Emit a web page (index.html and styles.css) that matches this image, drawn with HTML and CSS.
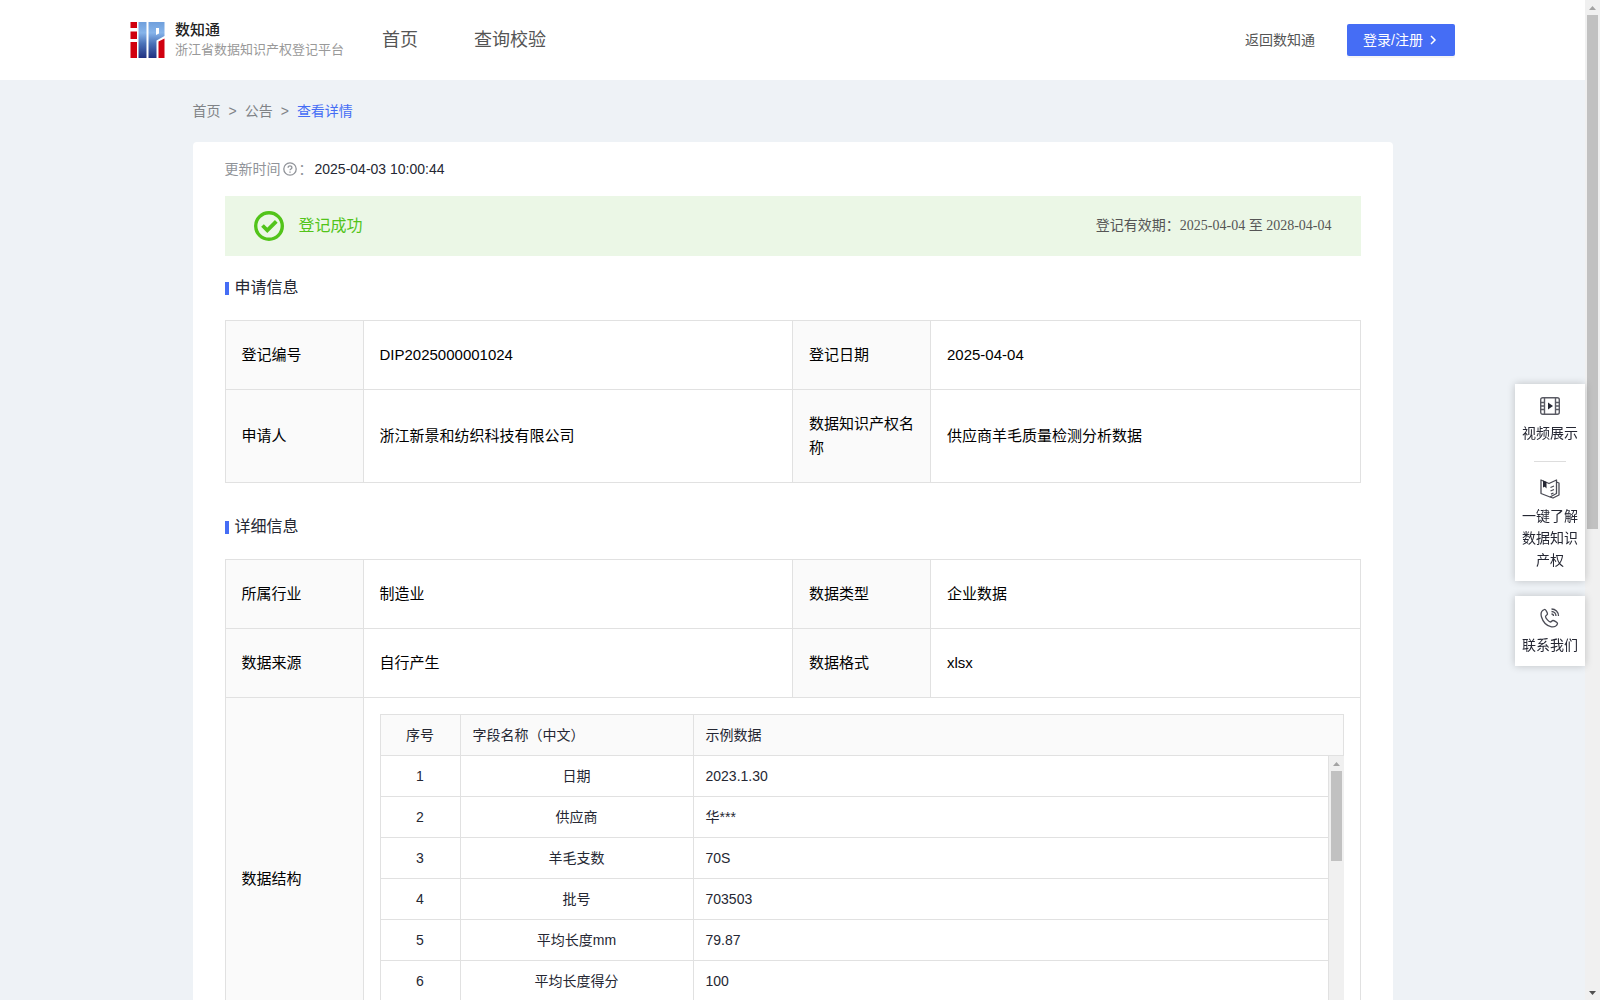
FILE: index.html
```html
<!DOCTYPE html>
<html lang="zh-CN">
  <head>
    <meta charset="utf-8">
    <meta name="viewport" content="width=device-width, initial-scale=1">
    <title>浙江省数据知识产权登记平台</title>
    <link rel="stylesheet" href="styles.css">
  </head>
  <body>
    <div class="page">
      <header class="header">
        <a class="brand" href="#">
          <svg class="brand-logo" viewBox="0 0 34 36" aria-hidden="true">
            <defs>
              <linearGradient id="blue" gradientUnits="userSpaceOnUse" x1="0" y1="0" x2="0" y2="36">
                <stop offset="0" stop-color="#6f9fdc"/>
                <stop offset="0.3" stop-color="#86b4ea"/>
                <stop offset="0.6" stop-color="#4a72b8"/>
                <stop offset="1" stop-color="#1f2f80"/>
              </linearGradient>
            </defs>
            <path fill="#d0000f" d="M0 0h6.500v6H0zM0 9.500h6.500v7.500H0zM0 20h6.500v16H0zM28 19.500l6-3V36h-6z"/>
            <path fill="url(#blue)" d="M8 0h8v36H8z"/>
            <path fill="url(#blue)" fill-rule="evenodd" d="M18 0h16v14l-8 4.500V36h-8zM25.500 6v7l3-1.500V6z"/>
          </svg>
          <span class="brand-text">
            <strong>数知通</strong>
            <span>浙江省数据知识产权登记平台</span>
          </span>
        </a>
        <nav class="nav">
          <a href="#">首页</a>
          <a href="#">查询校验</a>
        </nav>
        <a class="back" href="#">返回数知通</a>
        <button class="login" type="button">
          登录/注册
          <svg width="12" height="12" viewBox="0 0 12 12" aria-hidden="true"><path d="M4 2l4 4-4 4" fill="none" stroke="currentColor" stroke-width="1.5"/></svg>
        </button>
      </header>

      <main class="container">
        <nav class="breadcrumb" aria-label="breadcrumb">
          <a href="#">首页</a>
          <span>&gt;</span>
          <a href="#">公告</a>
          <span>&gt;</span>
          <a class="current" href="#">查看详情</a>
        </nav>

        <section class="card">
          <div class="update">
            <span class="update-label">更新时间</span>
            <svg width="14" height="14" viewBox="0 0 14 14" fill="none" stroke="#909399" stroke-width="1.3" aria-hidden="true">
              <circle cx="7" cy="7" r="6.2"/>
              <path d="M5.100 5.700c0-2.500 3.800-2.500 3.800 0 0 1.300-1.900 1.300-1.900 2.600M7 9.500v1.300"/>
            </svg>
            <span class="update-label">：</span>
            <time>2025-04-03 10:00:44</time>
          </div>

          <div class="banner">
            <svg width="30" height="30" viewBox="0 0 30 30" fill="none" stroke="#52c41a" stroke-width="3.400" aria-hidden="true">
              <circle cx="15" cy="15" r="13.300"/>
              <path d="M8.500 14.500l4.800 4.800 9-9" stroke-width="3.800"/>
            </svg>
            <span class="banner-status">登记成功</span>
            <span class="banner-date">登记有效期：2025-04-04 至 2028-04-04</span>
          </div>

          <h2>申请信息</h2>
          <table class="info">
            <colgroup><col class="label"><col><col class="label"><col></colgroup>
            <tr>
              <th scope="row">登记编号</th>
              <td>DIP2025000001024</td>
              <th scope="row">登记日期</th>
              <td>2025-04-04</td>
            </tr>
            <tr>
              <th scope="row">申请人</th>
              <td>浙江新景和纺织科技有限公司</td>
              <th scope="row">数据知识产权名称</th>
              <td>供应商羊毛质量检测分析数据</td>
            </tr>
          </table>

          <h2>详细信息</h2>
          <table class="info">
            <colgroup><col class="label"><col><col class="label"><col></colgroup>
            <tr>
              <th scope="row">所属行业</th>
              <td>制造业</td>
              <th scope="row">数据类型</th>
              <td>企业数据</td>
            </tr>
            <tr>
              <th scope="row">数据来源</th>
              <td>自行产生</td>
              <th scope="row">数据格式</th>
              <td>xlsx</td>
            </tr>
            <tr>
              <th scope="row">数据结构</th>
              <td class="nested" colspan="3">
                <div class="fields">
                  <table class="fields-table fields-head">
                    <colgroup><col class="no"><col class="name"><col></colgroup>
                    <tr><th scope="col">序号</th><th scope="col">字段名称（中文）</th><th scope="col">示例数据</th></tr>
                  </table>
                  <div class="fields-body">
                    <div class="fields-scroll">
                      <table class="fields-table">
                        <colgroup><col class="no"><col class="name"><col></colgroup>
                        <tr><td>1</td><td>日期</td><td>2023.1.30</td></tr>
                        <tr><td>2</td><td>供应商</td><td>华***</td></tr>
                        <tr><td>3</td><td>羊毛支数</td><td>70S</td></tr>
                        <tr><td>4</td><td>批号</td><td>703503</td></tr>
                        <tr><td>5</td><td>平均长度mm</td><td>79.87</td></tr>
                        <tr><td>6</td><td>平均长度得分</td><td>100</td></tr>
                      </table>
                    </div>
                    <div class="scrollbar scrollbar-fields" aria-hidden="true">
                      <svg class="scrollbar-arrow" viewBox="0 0 15 15"><path d="M4 10l3.500-4 3.500 4z" fill="#a3a3a3"/></svg>
                      <div class="scrollbar-track"><div class="scrollbar-thumb"></div></div>
                      <svg class="scrollbar-arrow" viewBox="0 0 15 15"><path d="M4 6l3.500 4L11 6z" fill="#505050"/></svg>
                    </div>
                  </div>
                </div>
              </td>
            </tr>
          </table>
        </section>
      </main>

      <aside class="side">
        <div class="side-group">
          <a href="#">
            <svg width="20" height="20" viewBox="0 0 20 20" fill="none" stroke="#5a5b64" stroke-width="1.400" aria-hidden="true">
              <rect x="0.700" y="1.700" width="18.600" height="16.600" rx="2"/>
              <path d="M4.500 2v16M15.500 2v16M1 6.500h3.500M1 10h3.500M1 13.500h3.500M15.500 6.500H19M15.500 10H19M15.500 13.500H19"/>
              <path d="M8 6.500l5 3.500-5 3.500z" fill="#252733" stroke="none"/>
            </svg>
            视频展示
          </a>
          <hr>
          <a href="#">
            <svg width="20" height="20" viewBox="0 0 20 20" fill="none" stroke="#4a4b55" stroke-width="1.300" stroke-linejoin="round" aria-hidden="true">
              <path d="M1 1l8 3.500L16.500 1v13.500L10 18l-9-3.500zM16.500 3l2.500 1v12l-6 3-3-1"/>
              <path d="M10.500 8.500L14 7M10.500 12l3.500-1.500M11 15.200l2.500-1.200"/>
              <path d="M3 1.500l3.500 1.400V9.500L4.800 7.800 3 8.500z" fill="#252733" stroke="none"/>
            </svg>
            一键了解数据知识产权
          </a>
        </div>
        <div class="side-group">
          <a href="#">
            <svg width="20" height="20" viewBox="0 0 20 20" fill="none" stroke="#4a4b55" stroke-width="1.300" stroke-linejoin="round" aria-hidden="true">
              <path d="M4.500 1.500C1.500 2.500.5 5.500 1.500 9c1.500 5 5.500 9 10 9.800 3 .5 5.500-1 6-3.300.2-1-3.500-3-4.500-3-1.200 0-1.500 1.500-2.500 1.500C9 14 5.500 10 5.500 8.500 5.500 7.500 7.500 7 7.500 6 7.500 4.500 5.500 1.200 4.500 1.500z"/>
              <path d="M11.500 1C15.500 1 18.500 4 18.500 8M11.500 3.500C14 3.500 16 5.500 16 8M11.500 6C12.800 6 13.500 6.700 13.500 8"/>
            </svg>
            联系我们
          </a>
        </div>
      </aside>
    </div>

    <div class="scrollbar scrollbar-page" aria-hidden="true">
      <svg class="scrollbar-arrow" viewBox="0 0 15 15"><path d="M4 10l3.500-4 3.500 4z" fill="#a3a3a3"/></svg>
      <div class="scrollbar-track"><div class="scrollbar-thumb"></div></div>
      <svg class="scrollbar-arrow" viewBox="0 0 15 15"><path d="M4 6l3.500 4L11 6z" fill="#505050"/></svg>
    </div>
  </body>
</html>
```

FILE: styles.css
```css
:root {
  font-family: "Liberation Sans", Arial, "Noto Sans CJK SC", sans-serif;
  font-size: 14px;
  line-height: 22px;
  color: #252733;
  background: #eef2f6;
}

* {
  box-sizing: border-box;
}

body {
  display: flex;
  height: 100vh;
  margin: 0;
}

a {
  color: inherit;
  text-decoration: none;
}

.page {
  flex: 1;
  overflow-y: auto;
  scrollbar-width: none;
}

/* classic grey scrollbars */
.scrollbar {
  display: flex;
  flex-direction: column;
  flex-shrink: 0;
  width: 15px;
  background: #f0f0f0;
}
.scrollbar-arrow {
  flex-shrink: 0;
  width: 15px;
  height: 15px;
}
.scrollbar-track {
  flex: 1;
  padding: 0 2px;
}
.scrollbar-thumb {
  background: #c1c1c1;
}
.scrollbar-page .scrollbar-thumb {
  height: 53%;
}
.scrollbar-fields .scrollbar-thumb {
  height: 35%;
}

.header {
  display: flex;
  align-items: center;
  height: 80px;
  padding: 0 130px;
  background: #fff;
  color: #555;
}
.brand {
  display: flex;
  align-items: center;
  gap: 10px;
}
.brand-logo {
  width: 35px;
  height: 36px;
}
.brand-text {
  display: flex;
  flex-direction: column;
  font-size: 13px;
  line-height: 20px;
  color: #999;
}
.brand-text strong {
  font-size: 15px;
  font-weight: 500;
  color: #222;
}
.nav {
  display: flex;
  gap: 56px;
  margin-left: 38px;
  font-size: 18px;
}
.back {
  margin-left: auto;
}
.login {
  display: flex;
  align-items: center;
  gap: 4px;
  height: 32px;
  margin-left: 32px;
  padding: 0 16px;
  border: none;
  border-radius: 2px;
  background: #456df5;
  box-shadow: 0 2px 0 rgba(0, 0, 0, 0.04);
  color: #fff;
  font: inherit;
}

.container {
  max-width: 1200px;
  margin: 0 auto;
}
.breadcrumb {
  display: flex;
  gap: 8px;
  padding: 20px 0;
  color: #808387;
}
.breadcrumb .current {
  color: #456df5;
}

.card {
  padding: 16px 32px;
  border-radius: 4px;
  background: #fff;
}
.update {
  display: flex;
  align-items: center;
  gap: 2px;
  margin-bottom: 16px;
}
.update-label {
  color: #909399;
}

.banner {
  display: flex;
  align-items: center;
  height: 60px;
  padding: 0 29px;
  background: #ebf7e6;
}
.banner-status {
  margin-left: 15px;
  font-size: 16px;
  color: #52c41a;
}
.banner-date {
  margin-left: auto;
  font-family: "Liberation Serif", "Noto Sans CJK SC", serif;
  color: #555;
}

h2 {
  display: flex;
  align-items: center;
  gap: 6px;
  margin: 20px 0;
  font-size: 16px;
  font-weight: normal;
  line-height: 24px;
}
h2::before {
  content: "";
  width: 4px;
  height: 13px;
  background: #456df5;
}

.info {
  width: 100%;
  margin-bottom: 32px;
  border-collapse: collapse;
  table-layout: fixed;
  font-size: 15px;
  line-height: 24px;
  color: #000;
}
.info .label {
  width: 138px;
}
.info > tbody > tr > th,
.info > tbody > tr > td {
  padding: 22px 16px;
  border: 1px solid #e1e1e1;
  font-weight: normal;
  text-align: left;
}
.info > tbody > tr > th {
  background: #fafafa;
}
.info > tbody > tr > .nested {
  padding: 16px;
}

.fields {
  font-size: 14px;
  line-height: 22px;
  color: #252733;
}
.fields-body {
  display: flex;
  height: 287px;
}
.fields-scroll {
  flex: 1;
}
.fields-table {
  width: 100%;
  border-left: 1px solid #e1e1e1;
  border-spacing: 0;
  table-layout: fixed;
}
.fields-table .no {
  width: 80px;
}
.fields-table .name {
  width: 233px;
}
.fields-table th,
.fields-table td {
  height: 41px;
  padding: 0 12px;
  border: solid #e1e1e1;
  border-width: 0 1px 1px 0;
  font-weight: normal;
  text-align: left;
}
.fields-table th:first-child,
.fields-table td:first-child,
.fields-table td:nth-child(2) {
  text-align: center;
}
.fields-head {
  border-top: 1px solid #e1e1e1;
  background: #fafafa;
}

/* floats over the page, left of the scrollbar */
.side {
  position: fixed;
  top: 384px;
  right: 15px;
  display: flex;
  flex-direction: column;
  gap: 15px;
  width: 70px;
}
.side-group {
  padding: 12px 7px 10px;
  background: #fff;
  box-shadow: 0 0 8px rgba(0, 0, 0, 0.2);
  text-align: center;
}
.side-group a {
  display: flex;
  flex-direction: column;
  align-items: center;
  gap: 6px;
}
.side-group hr {
  width: 32px;
  margin: 17px auto;
  border: none;
  border-top: 1px solid #ddd;
}
```
